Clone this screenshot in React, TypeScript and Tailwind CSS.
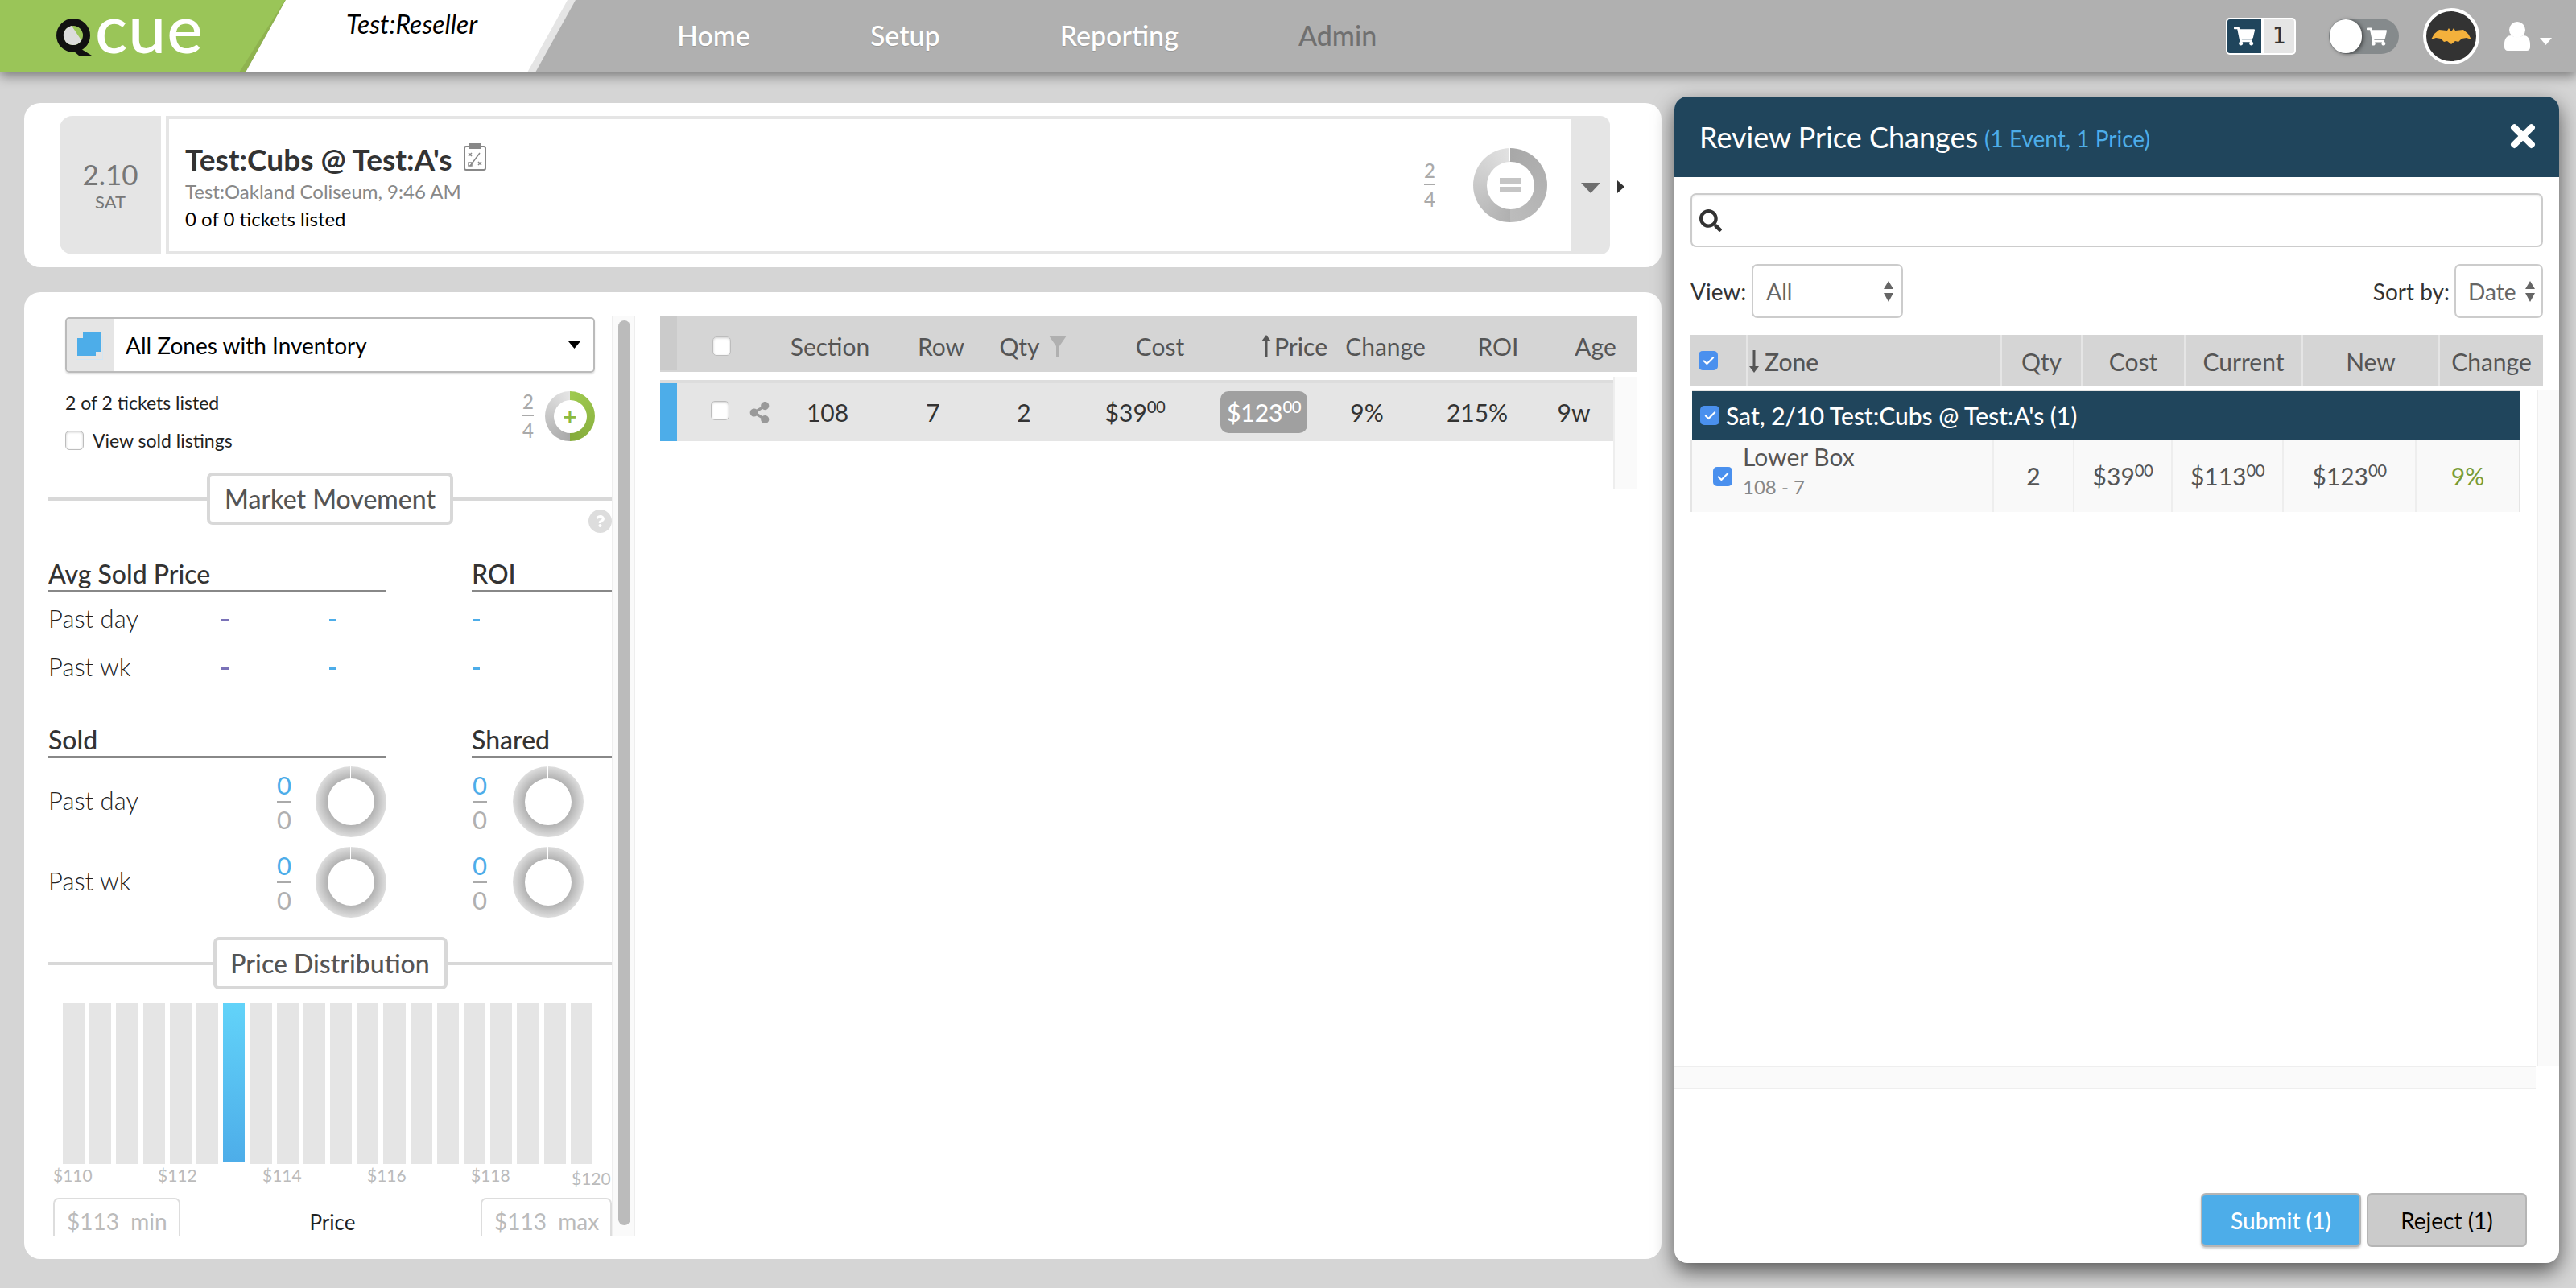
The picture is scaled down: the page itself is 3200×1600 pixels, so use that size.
import { Check } from 'lucide-react'
import { FaQuestion, FaSearch, FaShareAlt, FaShoppingCart, FaTimes } from 'react-icons/fa'
import type { ReactNode } from 'react'

const bars = Array.from({ length: 20 }, (_, i) => i)

function Money({ whole }: { whole: string }) {
  return (
    <span>
      {whole}
      <sup className="text-[0.68em] tracking-tight">00</sup>
    </span>
  )
}

function Box() {
  return <div className="w-[23px] h-[24px] rounded-[5px] bg-white border border-[#bdbdbd] shadow-[inset_0_1px_3px_rgba(0,0,0,0.2)]" />
}

function BlueCheck() {
  return (
    <div className="w-[24px] h-[24px] rounded-[5px] bg-[#4a90ee] flex items-center justify-center text-white">
      <Check size={17} strokeWidth={3} />
    </div>
  )
}

function UpDown() {
  return (
    <svg width="12" height="26" viewBox="0 0 12 26" className="fill-[#666]">
      <polygon points="6,0 12,10 0,10" />
      <polygon points="0,15 12,15 6,26" />
    </svg>
  )
}

function SectionTitle({ children, box }: { children: ReactNode; box: string }) {
  return (
    <div className="flex items-center">
      <div className="flex-1 h-[4px] bg-[#d8d8d8]" />
      <div className={`${box} flex items-center justify-center border-[4px] border-[#d8d8d8] rounded-[7px] text-[#555] font-medium`}>
        {children}
      </div>
      <div className="flex-1 h-[4px] bg-[#d8d8d8]" />
    </div>
  )
}

function TinyRing() {
  return (
    <div className="relative w-[88px] h-[88px] rounded-full bg-[radial-gradient(circle_closest-side,#b2b2b2_66%,#dedede_100%)] flex items-center justify-center">
      <div className="absolute left-[43px] top-0 w-[1px] h-[16px] bg-white" />
      <div className="w-[58px] h-[58px] rounded-full bg-white" />
    </div>
  )
}

function ZeroFraction() {
  return (
    <div className="w-[20px] flex flex-col items-center text-[31px] leading-[30px] font-normal">
      <span className="text-[#4dade9]">0</span>
      <div className="w-[18px] h-[2px] bg-[#aaa] mt-[5px] mb-[6px]" />
      <span className="text-[#b0b0b0]">0</span>
    </div>
  )
}

function GrayFraction() {
  return (
    <div className="w-[16px] flex flex-col items-center text-[24px] leading-[26px] font-medium text-[#aaa]">
      <span>2</span>
      <div className="w-[14px] h-[2px] bg-[#aaa] mt-[3px] mb-[5px]" />
      <span>4</span>
    </div>
  )
}

function PastRow({ label, dashes }: { label: string; dashes: ReactNode }) {
  return (
    <div className="h-[60px] flex items-center text-[31px] font-light text-[#222]">
      <div className="w-[215px] -mt-[4px]">{label}</div>
      {dashes}
    </div>
  )
}

function Dashes() {
  return (
    <>
      <div className="w-[134px]"><div className="w-[9px] h-[3px] bg-[#7a72b8]" /></div>
      <div className="w-[178px]"><div className="w-[9px] h-[3px] bg-[#4dade9]" /></div>
      <div className="w-[9px] h-[3px] bg-[#4dade9]" />
    </>
  )
}

function SoldRow({ label }: { label: string }) {
  return (
    <div className="h-[100px] flex items-center text-[31px] font-light text-[#222]">
      <div className="w-[283px] -mt-[3px]">{label}</div>
      <ZeroFraction />
      <div className="ml-[29px]"><TinyRing /></div>
      <div className="ml-[106px]"><ZeroFraction /></div>
      <div className="ml-[31px]"><TinyRing /></div>
    </div>
  )
}

function TopBar() {
  return (
    <header className="relative z-10 h-[90px] flex bg-[#b0b0b0] shadow-[0_4px_14px_rgba(0,0,0,0.45)]">
      <div className="w-[356px] h-full bg-[#8fb34f] [clip-path:polygon(0_0,356px_0,305px_90px,0_90px)]">
        <div className="w-full h-full bg-[#9ac558] [clip-path:polygon(0_0,354px_0,297px_90px,0_90px)] flex items-start pl-[70px]">
          <svg width="46" height="46" viewBox="0 0 46 46" className="shrink-0 mt-[23px]">
            <circle cx="21" cy="21" r="16.5" fill="none" stroke="#111" strokeWidth="9" />
            <path d="M12 13 A12 12 0 0 1 19 9 L31 27 A12 12 0 0 1 20 33 A12 12 0 0 1 12 13Z" fill="#dcdcdc" />
            <path d="M23 33 L44 46 L28 46 L16 36Z" fill="#111" />
          </svg>
          <span className="ml-[2px] text-[84px] leading-[68px] font-medium text-white tracking-[1px]">cue</span>
        </div>
      </div>
      <div className="-ml-[51px] w-[410px] h-full bg-[#e5e5e5] [clip-path:polygon(50px_0,410px_0,360px_90px,0_90px)]">
        <div className="w-full h-full bg-white [clip-path:polygon(50px_0,400px_0,350px_90px,0_90px)] pl-[125px] pt-[10px] text-[32px] leading-[40px] italic text-black">
          Test:Reseller
        </div>
      </div>
      <nav className="ml-[126px] -mt-[4px] flex items-center gap-[149px] text-[34px] font-medium [text-shadow:0_1px_1px_rgba(0,0,0,0.15)]">
        <span className="text-white">Home</span>
        <span className="text-white">Setup</span>
        <span className="text-white">Reporting</span>
        <span className="text-[#707070] [text-shadow:none]">Admin</span>
      </nav>
      <div className="ml-auto pr-[30px] flex items-center">
        <div className="w-[87px] h-[46px] p-[2px] flex gap-[3px] rounded-[5px] bg-white">
          <div className="w-[42px] rounded-l-[3px] bg-[#20455c] flex items-center justify-center text-white"><FaShoppingCart size={26} /></div>
          <div className="flex-1 rounded-r-[3px] bg-[#e5e5e5] flex items-center justify-center text-[28px] text-[#333] font-['DejaVu_Sans_Mono',monospace]">1</div>
        </div>
        <div className="ml-[41px] w-[87px] h-[44px] rounded-full bg-[#858a8c] flex items-center">
          <div className="ml-[1px] w-[40px] h-[42px] rounded-full bg-white shadow-[2px_1px_5px_rgba(0,0,0,0.5)]" />
          <FaShoppingCart size={25} className="ml-[6px] text-white" />
        </div>
        <div className="ml-[30px] w-[70px] h-[70px] rounded-full border-[4px] border-white bg-[#333] flex items-center justify-center">
          <svg width="50" height="21" viewBox="0 0 50 21" className="fill-[#f4b13c]">
            <polygon points="0,14 4,7 10,2 20,3 22,0 24,3 26,3 28,0 30,3 40,2 46,7 50,14 44,12 38,13 34,17 30,16 25,20 20,16 16,17 12,13 6,12" />
          </svg>
        </div>
        <svg width="32" height="36" viewBox="0 0 32 36" className="ml-[31px] fill-white">
          <circle cx="16" cy="10" r="10" />
          <path d="M0 28 C0 20 4 17 9 17 C12 20 20 20 23 17 C28 17 32 20 32 28 L32 32 C32 34 30 36 28 36 L4 36 C2 36 0 34 0 32Z" />
        </svg>
        <svg width="15" height="9" viewBox="0 0 15 9" className="ml-[12px] mt-[13px] fill-white">
          <polygon points="0,0 15,0 7.5,9" />
        </svg>
      </div>
    </header>
  )
}

function EventCard() {
  return (
    <section className="mt-[38px] ml-[30px] w-[2034px] h-[204px] rounded-[20px] bg-white pl-[44px] pr-[46px] py-[16px] flex items-center">
      <div className="w-[126px] h-full shrink-0 rounded-l-[16px] bg-[#e5e5e5] flex flex-col items-center pt-[48px] text-[#777]">
        <span className="text-[35px] leading-[48px]">2.10</span>
        <span className="text-[22px] leading-[26px] -mt-[2px]">SAT</span>
      </div>
      <div className="ml-[6px] flex-1 h-full border-y-[4px] border-l-[4px] border-[#e5e5e5] flex items-center pl-[20px] pr-[30px]">
        <div className="self-start pt-[28px]">
          <div className="flex items-center h-[44px]">
            <span className="text-[37px] font-bold text-[#333] leading-[44px]">Test:Cubs @ Test:A's</span>
            <svg width="28" height="34" viewBox="0 0 28 34" className="ml-[14px] -mt-[6px] fill-none stroke-[#888]" strokeWidth="2">
              <rect x="1" y="4" width="26" height="29" rx="2" />
              <rect x="8" y="1" width="12" height="5" fill="#888" />
              <path d="M6 12l4 4m0-4l-4 4M18 23l4 4m0-4l-4 4M8 28l12-16" strokeWidth="1.5" />
              <rect x="6" y="24" width="4" height="4" strokeWidth="1.5" />
            </svg>
          </div>
          <div className="mt-[2px] text-[24px] leading-[32px] text-[#888]">Test:Oakland Coliseum, 9:46 AM</div>
          <div className="mt-[2px] text-[24px] leading-[32px] text-black">0 of 0 tickets listed</div>
        </div>
        <div className="ml-auto"><GrayFraction /></div>
        <div className="ml-[46px] relative w-[92px] h-[92px] rounded-full bg-[conic-gradient(#a8a8a8_0deg,#bcbcbc_180deg,#b0b0b0_180deg,#e2e2e2_360deg)] flex items-center justify-center">
          <div className="absolute left-[45px] top-0 w-[1px] h-[16px] bg-white" />
          <div className="w-[59px] h-[59px] rounded-full bg-white flex flex-col items-center justify-center gap-[4px]">
            <div className="w-[26px] h-[7px] bg-[#c5c5c5]" />
            <div className="w-[26px] h-[7px] bg-[#c5c5c5]" />
          </div>
        </div>
      </div>
      <div className="w-[48px] h-full shrink-0 rounded-r-[12px] bg-[#e5e5e5] flex items-center justify-center">
        <svg width="24" height="13" viewBox="0 0 24 13" className="fill-[#6e6e6e] mt-[6px]"><polygon points="0,0 24,0 12,13" /></svg>
      </div>
      <svg width="9" height="16" viewBox="0 0 9 16" className="ml-[9px] mt-[4px] fill-[#333]"><polygon points="0,0 9,8 0,16" /></svg>
    </section>
  )
}

function InsightColumn() {
  return (
    <div className="relative w-[700px] h-[1144px] overflow-hidden pt-[2px]">
      <div className="ml-[21px] w-[658px] h-[69px] flex rounded-[5px] border-[2px] border-[#bbb] shadow-[0_2px_2px_rgba(0,0,0,0.12)] overflow-hidden">
        <div className="w-[59px] bg-[#e5e5e5] relative">
          <div className="absolute left-[11px] top-[21px] w-[34px] h-[30px] border border-[#d3e6f3]" />
          <div className="absolute left-[20px] top-[17px] w-[22px] h-[24px] bg-[#4dade9]" />
          <div className="absolute left-[13px] top-[24px] w-[23px] h-[22px] bg-[#4dade9]" />
        </div>
        <div className="flex-1 flex items-center pl-[14px] pr-[16px] text-[28px] text-black">
          All Zones with Inventory
          <svg width="15" height="9" viewBox="0 0 15 9" className="ml-auto fill-black"><polygon points="0,0 15,0 7.5,9" /></svg>
        </div>
      </div>
      <div className="relative mt-[23px] ml-[21px] w-[658px] h-[77px] text-[23px] text-[#222]">
        <div className="leading-[28px]">2 of 2 tickets listed</div>
        <div className="mt-[17px] h-[32px] flex items-center leading-[32px]">
          <Box />
          <span className="ml-[11px]">View sold listings</span>
        </div>
        <div className="absolute right-0 top-0 flex items-center gap-[13px]">
          <GrayFraction />
          <div className="w-[62px] h-[62px] rounded-full bg-[conic-gradient(#9fca50_0deg,#85ab3b_180deg,#a8a8a8_180deg,#e5e5e5_360deg)] flex items-center justify-center">
            <div className="w-[41px] h-[41px] rounded-full bg-white flex items-center justify-center text-[30px] leading-none font-bold text-[#8cba3f]">+</div>
          </div>
        </div>
      </div>
      <div className="relative mt-[24px]">
        <SectionTitle box="w-[306px] h-[65px] text-[32px]">Market Movement</SectionTitle>
        <div className="absolute right-0 top-[46px] w-[29px] h-[29px] rounded-full bg-[#ddd] flex items-center justify-center text-white">
          <FaQuestion size={15} />
        </div>
      </div>
      <div className="mt-[40px] flex text-[32px] font-medium text-[#333] leading-[41px]">
        <div className="w-[420px] h-[44px] border-b-[3px] border-[#888]">Avg Sold Price</div>
        <div className="ml-[106px] w-[174px] h-[44px] border-b-[3px] border-[#888]">ROI</div>
      </div>
      <div className="mt-[4px]">
        <PastRow label="Past day" dashes={<Dashes />} />
        <PastRow label="Past wk" dashes={<Dashes />} />
      </div>
      <div className="mt-[38px] flex text-[32px] font-medium text-[#333] leading-[41px]">
        <div className="w-[420px] h-[44px] border-b-[3px] border-[#888]">Sold</div>
        <div className="ml-[106px] w-[174px] h-[44px] border-b-[3px] border-[#888]">Shared</div>
      </div>
      <div className="mt-[4px]">
        <SoldRow label="Past day" />
        <SoldRow label="Past wk" />
      </div>
      <div className="mt-[18px]">
        <SectionTitle box="w-[291px] h-[65px] text-[32px]">Price Distribution</SectionTitle>
      </div>
      <div className="mt-[17px] ml-[18px] mr-[24px] h-[200px] flex gap-[6px]">
        {bars.map((b) => (
          <div
            key={b}
            className={b === 6 ? 'flex-1 h-[198px] bg-[linear-gradient(#62d3f9,#4dade9)]' : 'flex-1 bg-[#e5e5e5]'}
          />
        ))}
      </div>
      <div className="ml-[6px] h-[28px] flex text-[21px] leading-[28px] text-[#bbb]">
        <span className="w-[130px]">$110</span>
        <span className="w-[130px]">$112</span>
        <span className="w-[130px]">$114</span>
        <span className="w-[129px]">$116</span>
        <span className="w-[125px]">$118</span>
        <span className="mt-[4px]">$120</span>
      </div>
      <div className="mt-[14px] ml-[6px] flex items-start">
        <div className="w-[158px] h-[70px] rounded-[7px] border-[2px] border-[#ddd] pl-[15px] pt-[9px] text-[28px] leading-[36px] text-[#bbb]">$113&nbsp; min</div>
        <div className="flex-1 pl-[5px] pt-[12px] text-center text-[26px] leading-[36px] text-[#222]">Price</div>
        <div className="w-[163px] h-[70px] rounded-[7px] border-[2px] border-[#ddd] pl-[15px] pt-[9px] text-[28px] leading-[36px] text-[#bbb]">$113&nbsp; max</div>
      </div>
    </div>
  )
}

function ListingTable() {
  return (
    <div className="ml-[31px] w-[1214px]">
      <div className="h-[70px] pt-[6px] grid grid-cols-[21px_119px_142px_134px_94px_222px_112px_114px_166px_76px_14px] items-center bg-[#d5d5d5] text-[30px] text-[#555] text-center">
        <div className="self-start -mt-[6px] h-[68px] bg-[#cbcbcb]" />
        <div className="pl-[44px]"><Box /></div>
        <div>Section</div>
        <div>Row</div>
        <div className="flex items-center justify-center gap-[11px]">
          Qty
          <svg width="22" height="26" viewBox="0 0 22 26" className="fill-[#b0b0b0]"><polygon points="0,0 22,0 13,13 13,26 9,26 9,13" /></svg>
        </div>
        <div>Cost</div>
        <div className="flex items-center justify-center gap-[4px] font-medium">
          <svg width="12" height="28" viewBox="0 0 12 28" className="fill-[#555]"><polygon points="6,0 12,8 7.5,8 7.5,28 4.5,28 4.5,8 0,8" /></svg>
          Price
        </div>
        <div>Change</div>
        <div>ROI</div>
        <div>Age</div>
        <div />
      </div>
      <div className="flex mt-[6px]">
        <div className="w-[1184px] mt-[4px]">
          <div className="h-[4px] bg-[#dddddd]" />
          <div className="h-[72px] grid grid-cols-[21px_119px_136px_126px_100px_176px_144px_112px_162px_78px] items-center bg-[#e5e5e5] text-[30px] text-[#333] text-center">
            <div className="h-full bg-[#4dade9]" />
            <div className="flex items-center pl-[42px]">
              <div className="-mt-[4px]"><Box /></div>
              <FaShareAlt size={27} className="ml-[24px] text-[#999]" />
            </div>
            <div>108</div>
            <div>7</div>
            <div>2</div>
            <div><Money whole="$39" /></div>
            <div className="flex justify-center">
              <div className="w-[108px] h-[52px] rounded-[10px] bg-[#a0a0a0] flex items-center justify-center text-white font-medium"><Money whole="$123" /></div>
            </div>
            <div>9%</div>
            <div>215%</div>
            <div>9w</div>
          </div>
        </div>
        <div className="w-[30px] h-[140px] bg-[#fafafa] border-l-[2px] border-[#eeeeee]" />
      </div>
    </div>
  )
}

function ReviewPanel() {
  return (
    <aside className="absolute z-20 left-[2080px] top-[120px] w-[1099px] h-[1449px] rounded-[16px] bg-white overflow-visible shadow-[0_10px_26px_rgba(0,0,0,0.6)]">
      <div className="h-[100px] rounded-t-[16px] bg-[#20455c] flex items-center pl-[31px] pr-[23px]">
        <span className="text-[36px] text-white">Review Price Changes</span>
        <span className="ml-[8px] mt-[4px] text-[28px] text-[#4dade9]">(1 Event, 1 Price)</span>
        <FaTimes size={44} className="ml-auto -mt-[2px] text-white" />
      </div>
      <div className="mt-[20px] ml-[20px] w-[1059px] h-[67px] rounded-[7px] border-[2px] border-[#ccc] shadow-[inset_0_2px_2px_rgba(0,0,0,0.06)] flex items-center pl-[9px] text-[#333]">
        <FaSearch size={28} />
      </div>
      <div className="mt-[21px] ml-[20px] w-[1059px] flex items-center text-[28px] text-[#333]">
        <span>View:</span>
        <div className="ml-[7px] w-[188px] h-[67px] rounded-[7px] border-[2px] border-[#ccc] flex items-center pl-[16px] pr-[10px] text-[#666]">
          All
          <div className="ml-auto flex"><UpDown /></div>
        </div>
        <span className="ml-auto">Sort by:</span>
        <div className="ml-[6px] w-[110px] h-[67px] rounded-[7px] border-[2px] border-[#ccc] flex items-center pl-[15px] pr-[8px] text-[#666]">
          Date
          <div className="ml-auto flex"><UpDown /></div>
        </div>
      </div>
      <div className="mt-[21px] ml-[20px] w-[1059px] h-[64px] grid grid-cols-[69px_316px_100px_128px_146px_170px_130px] items-center bg-[#d5d5d5] text-[30px] text-[#555] text-center">
        <div className="h-full flex items-center pl-[10px]"><BlueCheck /></div>
        <div className="h-full border-l-[2px] border-[#e5e5e5] flex items-center pl-[2px] pt-[2px] gap-[7px] font-medium">
          <svg width="12" height="28" viewBox="0 0 12 28" className="fill-[#555]"><polygon points="4.5,0 7.5,0 7.5,20 12,20 6,28 0,20 4.5,20" /></svg>
          Zone
        </div>
        <div className="h-full border-l-[2px] border-[#e5e5e5] pt-[2px] flex items-center justify-center">Qty</div>
        <div className="h-full border-l-[2px] border-[#e5e5e5] pt-[2px] flex items-center justify-center">Cost</div>
        <div className="h-full border-l-[2px] border-[#e5e5e5] pt-[2px] flex items-center justify-center">Current</div>
        <div className="h-full border-l-[2px] border-[#e5e5e5] pt-[2px] flex items-center justify-center">New</div>
        <div className="h-full border-l-[2px] border-[#e5e5e5] pt-[2px] flex items-center justify-center">Change</div>
      </div>
      <div className="mt-[4px] h-[840px] flex">
        <div className="ml-[20px] w-[1031px]">
          <div className="border-t-[2px] border-[#e5e5e5] ml-[2px] mr-[1px]" />
          <div className="h-[60px] ml-[2px] mr-[1px] bg-[#20455c] flex items-center pl-[10px] text-[30px] font-medium text-white">
            <BlueCheck />
            <span className="ml-[8px]">Sat, 2/10 Test:Cubs @ Test:A's (1)</span>
          </div>
          <div className="h-[90px] grid grid-cols-[375px_100px_122px_138px_165px_129px_2px] items-center bg-[#f9f9f9] text-[30px] text-[#555] text-center">
            <div className="h-full flex items-center pl-[26px] border-l-[2px] border-[#e5e5e5] text-left">
              <div className="mt-[2px]"><BlueCheck /></div>
              <div className="ml-[13px] -mt-[10px]">
                <div className="text-[30px] leading-[38px]">Lower Box</div>
                <div className="text-[24px] leading-[38px] text-[#888]">108 - 7</div>
              </div>
            </div>
            <div className="h-full border-l-[2px] border-[#eee] flex items-center justify-center font-medium">2</div>
            <div className="h-full border-l-[2px] border-[#eee] flex items-center justify-center"><Money whole="$39" /></div>
            <div className="h-full border-l-[2px] border-[#eee] flex items-center justify-center"><Money whole="$113" /></div>
            <div className="h-full border-l-[2px] border-[#eee] flex items-center justify-center"><Money whole="$123" /></div>
            <div className="h-full border-l-[2px] border-[#eee] flex items-center justify-center text-[#7a9c35]">9%</div>
            <div className="h-full bg-[#e5e5e5]" />
          </div>
        </div>
        <div className="ml-[20px] w-[28px] h-full bg-[#fafafa] border-l-[2px] border-[#eeeeee]" />
      </div>
      <div className="w-[1070px] h-[29px] bg-[#fafafa] border-y-[2px] border-[#eeeeee]" />
      <div className="mt-[129px] pr-[40px] flex justify-end gap-[7px] text-[28px]">
        <div className="w-[199px] h-[67px] rounded-[6px] border-[2px] border-[#b5b5b5] border-y-[3px] bg-[#4dade9] text-white font-medium flex items-center justify-center shadow-[0_2px_3px_rgba(0,0,0,0.2)]">Submit (1)</div>
        <div className="w-[199px] h-[67px] rounded-[6px] border-[2px] border-[#b5b5b5] border-y-[3px] bg-[#cbcbcb] text-black flex items-center justify-center">Reject (1)</div>
      </div>
    </aside>
  )
}

export default function App() {
  return (
    <div className="relative w-[3200px] h-[1600px] overflow-hidden bg-[#d5d5d5] font-['Lato','Liberation_Sans',sans-serif]">
      <TopBar />
      <EventCard />
      <section className="mt-[31px] ml-[30px] w-[2034px] h-[1201px] rounded-[20px] bg-white pl-[30px] pt-[29px] flex">
        <InsightColumn />
        <div className="w-[29px] h-[1144px] bg-[#fafafa] border-x-[1px] border-[#eeeeee] pl-[7px] pt-[6px]">
          <div className="w-[15px] h-[1124px] rounded-full bg-[#bbbbbb]" />
        </div>
        <ListingTable />
      </section>
      <ReviewPanel />
    </div>
  )
}
